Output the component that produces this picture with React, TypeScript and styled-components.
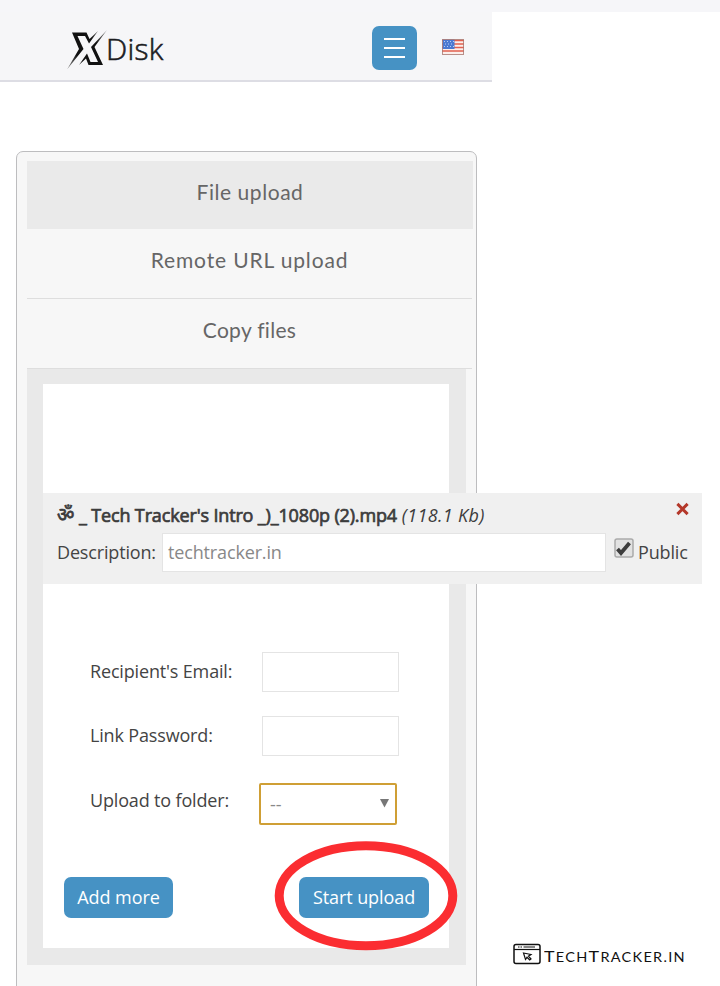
import React from "react";
import styled, { createGlobalStyle } from "styled-components";

const GlobalStyle = createGlobalStyle`
  * { box-sizing: border-box; }
  html, body { margin: 0; padding: 0; background: #fff; overflow: hidden; }
  body { font-family: "Open Sans", "Noto Sans", sans-serif; color: #444; }
`;

const Page = styled.div`
  width: 720px;
  height: 986px;
  overflow: hidden;
  position: relative;
  background: #fff;
`;
const TopStrip = styled.div`
  height: 12px;
  background: #f6f6f9;
`;
const Header = styled.header`
  width: 492px;
  height: 70px;
  background: #f6f6f8;
  border-bottom: 2px solid #dddde4;
  display: flex;
  align-items: flex-start;
  padding: 14px 28px 0 66px;
`;
const Logo = styled.div`
  display: flex;
  align-items: flex-start;
  width: 306px;
  padding-top: 2px;
`;
const LogoText = styled.span`
  font: 300 30px/38px "Open Sans", sans-serif;
  letter-spacing: 0.3px;
  color: #1c1c1f;
  -webkit-text-stroke: 0.6px #1c1c1f;
  margin: 2px 0 0 -4px;
`;
const MenuButton = styled.button`
  width: 45px;
  height: 44px;
  border: 0;
  border-radius: 7px;
  background: #4692c4;
  padding: 12px 12px 10px;
  display: flex;
  flex-direction: column;
  gap: 7px;
`;
const MenuLine = styled.span`
  width: 21px;
  height: 2px;
  flex: none;
  background: #fff;
`;
const Flag = styled.svg`
  margin: 13px 0 0 25px;
`;
const Panel = styled.main`
  width: 461px;
  height: 900px;
  margin: 69px 0 0 16px;
  border: 1.5px solid #bdbdbf;
  border-radius: 7px;
  background: #f7f7f7;
  padding: 9px 0 0 10px;
`;
const Tab = styled.div<{ $active?: boolean; $h: number }>`
  width: ${(p) => (p.$active ? 446 : 445)}px;
  height: ${(p) => p.$h}px;
  background: ${(p) => (p.$active ? "#eaeaea" : "transparent")};
  border-bottom: 1px solid ${(p) => (p.$active ? "#eaeaea" : "#dedede")};
  display: flex;
  justify-content: center;
  align-items: center;
  padding-bottom: ${(p) => (p.$active ? 5 : 7)}px;
  font: 400 21px/30px Lato, sans-serif;
  color: #666;
`;
const TabText = styled.span<{ $ls: number }>`
  letter-spacing: ${(p) => p.$ls}px;
  white-space: nowrap;
`;
const Frame = styled.section`
  width: 439px;
  height: 596px;
  background: #e9e9e9;
  padding: 15px 17px 17px 16px;
`;
const Sheet = styled.div`
  height: 564px;
  background: #fff;
  padding-top: 109px;
`;
const FileRow = styled.div`
  width: 659px;
  height: 91px;
  background: #f0f0f0;
  padding: 9px 13px 0 14px;
`;
const FileTop = styled.div`
  display: flex;
  height: 31px;
`;
const FileName = styled.div`
  font: 400 18px/27px "Open Sans", "Noto Sans", sans-serif;
  color: #3c3c3c;
  white-space: pre;
  width: 618px;
  flex: none;
`;
const Om = styled.span`
  display: inline-block;
  width: 22px;
  height: 27px;
  line-height: 24px;
  font-size: 19px;
  vertical-align: top;
  font-family: "Noto Sans", "Noto Sans Devanagari", sans-serif;
  -webkit-text-stroke: 0.7px #3c3c3c;
`;
const Name = styled.span`
  -webkit-text-stroke: 0.7px #3c3c3c;
  letter-spacing: -0.15px;
`;
const Size = styled.em`
  font-size: 18px;
  letter-spacing: 0.35px;
`;
const Remove = styled.svg`
  margin-left: 1px;
`;
const FileBottom = styled.div`
  display: flex;
`;
const Label = styled.label<{ $w: number }>`
  width: ${(p) => p.$w}px;
  flex: none;
  font-size: 18px;
  line-height: 38px;
  letter-spacing: -0.16px;
  white-space: nowrap;
`;
const Field = styled.div<{ $w: number; $h: number }>`
  width: ${(p) => p.$w}px;
  height: ${(p) => p.$h}px;
  border: 1.5px solid #e4e4e4;
  background: #fff;
  color: #888;
  font-size: 18px;
  letter-spacing: -0.15px;
  line-height: 36px;
  padding-left: 5px;
  flex: none;
`;
const Check = styled.svg`
  margin: 5px 4px 0 8px;
  flex: none;
`;
const Form = styled.div`
  padding: 68px 0 0 47px;
  height: 293px;
`;
const FormRow = styled.div<{ $h: number }>`
  display: flex;
  height: ${(p) => p.$h}px;
`;
const Select = styled.div`
  width: 138px;
  height: 42px;
  border: 2px solid #cf9f35;
  border-radius: 2px;
  display: flex;
  justify-content: space-between;
  align-items: center;
  padding: 0 6px 0 9px;
  font-size: 18px;
  color: #888;
  margin: 2px 0 0 -3px;
`;
const Actions = styled.div`
  display: flex;
  justify-content: space-between;
  padding: 0 20px 0 21px;
`;
const Action = styled.button<{ $w: number }>`
  width: ${(p) => p.$w}px;
  height: 41px;
  border: 0;
  border-radius: 7px;
  background: #4692c4;
  color: #fff;
  padding: 0 0 2px;
  white-space: nowrap;
  letter-spacing: -0.08px;
  font: 400 18px/38px "Open Sans", sans-serif;
`;
const Marker = styled.svg`
  position: absolute;
  left: 270px;
  top: 836px;
`;
const Watermark = styled.div`
  position: absolute;
  left: 513px;
  top: 943px;
  display: flex;
  color: #111;
`;
const MarkText = styled.span`
  font: 400 13px/20px Lato, sans-serif;
  letter-spacing: 1.15px;
  margin: 3px 0 0 3px;
  white-space: nowrap;
  transform: scaleX(1.115);
  transform-origin: left;
`;
const Cap = styled.span`
  font-size: 16px;
`;

export default function App() {
  return (
    <Page>
      <GlobalStyle />
      <TopStrip />
      <Header>
        <Logo>
          <svg width="44" height="44" viewBox="66 28 44 44">
            <defs>
              <linearGradient id="slash" gradientUnits="userSpaceOnUse" x1="107" y1="30" x2="67" y2="69">
                <stop offset="0" stopColor="#999" />
                <stop offset=".3" stopColor="#111" />
                <stop offset=".7" stopColor="#111" />
                <stop offset="1" stopColor="#999" />
              </linearGradient>
            </defs>
            <path d="M107 30 94.500 47 103 65H88.500L86 58.500 79 65 87 53.500 90.500 62H98L91 47Z" fill="url(#slash)" />
            <path d="M72 32.500H86.500L89.500 39 98 31 89 43.500 85 36H77.500L83.500 49 67 69.500 79 49Z" fill="url(#slash)" />
          </svg>
          <LogoText>Disk</LogoText>
        </Logo>
        <MenuButton aria-label="Menu">
          <MenuLine />
          <MenuLine />
          <MenuLine />
        </MenuButton>
        <Flag width="22" height="16" viewBox="0 0 22 16">
          <rect width="22" height="16" fill="#fbeeeb" />
          <path d="M0 1.500H22M0 5H22M0 8.500H22M0 12H22" stroke="#e2604f" strokeWidth="1.700" />
          <rect x=".5" y=".5" width="12" height="9.500" fill="#4a79d2" />
          <path d="M2 2.500H12M3 5H12M2 7.500H12" stroke="#b9cdf3" strokeDasharray="1 2" />
          <rect x=".5" y=".5" width="21" height="15" fill="none" stroke="#a77770" strokeOpacity=".8" />
        </Flag>
      </Header>
      <Panel>
        <Tab $active $h={68}><TabText $ls={0.55}>File upload</TabText></Tab>
        <Tab $h={70}><TabText $ls={0.85}>Remote URL upload</TabText></Tab>
        <Tab $h={70}><TabText $ls={0.3}>Copy files</TabText></Tab>
        <Frame>
          <Sheet>
            <FileRow>
              <FileTop>
                <FileName>
                  <Om>ॐ</Om>
                  <Name>_ Tech Tracker's Intro _)_1080p (2).mp4</Name> <Size>(118.1 Kb)</Size>
                </FileName>
                <Remove width="13" height="14" viewBox="0 0 14 14">
                  <path d="M1.500 1.500 12.500 12.500M12.500 1.500 1.500 12.500" stroke="#b4382a" strokeWidth="3.200" />
                </Remove>
              </FileTop>
              <FileBottom>
                <Label $w={105}>Description:</Label>
                <Field $w={444} $h={39}>techtracker.in</Field>
                <Check width="20" height="20" viewBox="0 0 20 20">
                  <rect x="1" y="1" width="18" height="18" rx="2" fill="#e2e2e2" stroke="#aaa" strokeWidth="1.500" />
                  <path d="M3.500 11 7 15 15.500 5" fill="none" stroke="#3d3d3d" strokeWidth="3.800" />
                </Check>
                <Label $w={50}>Public</Label>
              </FileBottom>
            </FileRow>
            <Form>
              <FormRow $h={64}><Label $w={172}>Recipient's Email:</Label><Field $w={137} $h={40} /></FormRow>
              <FormRow $h={65}><Label $w={172}>Link Password:</Label><Field $w={137} $h={40} /></FormRow>
              <FormRow $h={65}>
                <Label $w={172}>Upload to folder:</Label>
                <Select>
                  <span>--</span>
                  <svg width="9" height="10" viewBox="0 0 9 10"><path d="M0 0H9L4.500 8.500Z" fill="#777" /></svg>
                </Select>
              </FormRow>
            </Form>
            <Actions>
              <Action $w={109}>Add more</Action>
              <Action $w={130}>Start upload</Action>
            </Actions>
          </Sheet>
        </Frame>
      </Panel>
      <Marker width="192" height="120" viewBox="270 836 192 120">
        <ellipse cx="366" cy="895.700" rx="86.800" ry="50" fill="none" stroke="#fb2d31" strokeWidth="9" />
      </Marker>
      <Watermark>
        <svg width="28" height="22" viewBox="0 0 28 22" fill="none" stroke="#111" strokeWidth="1.500">
          <rect x="1" y="1.500" width="26" height="19" rx="2" />
          <path d="M1 6.500H27" strokeWidth="1.200" />
          <path d="M5 4H6.500M7.500 4H9M10.500 4H22" strokeWidth="1.200" />
          <path d="M10.500 10 18 11.500 15.500 13.200 18 16 16.700 17 14 14.300 12.500 16.500Z" strokeWidth="1.200" />
        </svg>
        <MarkText><Cap>T</Cap>ECH<Cap>T</Cap>RACKER.IN</MarkText>
      </Watermark>
    </Page>
  );
}
